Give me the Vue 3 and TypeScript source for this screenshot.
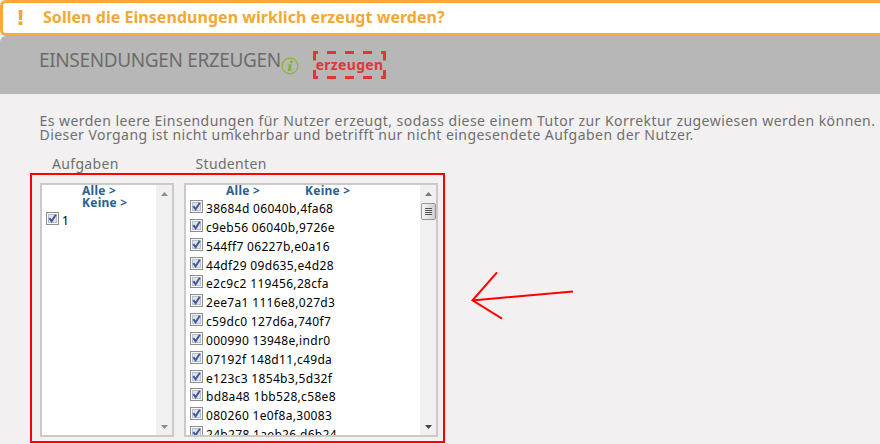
<script setup lang="ts">
const students: string[] = [
  '38684d 06040b,4fa68',
  'c9eb56 06040b,9726e',
  '544ff7 06227b,e0a16',
  '44df29 09d635,e4d28',
  'e2c9c2 119456,28cfa',
  '2ee7a1 1116e8,027d3',
  'c59dc0 127d6a,740f7',
  '000990 13948e,indr0',
  '07192f 148d11,c49da',
  'e123c3 1854b3,5d32f',
  'bd8a48 1bb528,c58e8',
  '080260 1e0f8a,30083',
  '24b278 1aeb26,d6b24',
]
const tasks: string[] = ['1']
</script>

<template>
  <div class="page">
    <div class="banner">
      <svg class="bang" width="5" height="15" viewBox="0 0 5 15"><path d="M0.5 0H4.5L4 10H1ZM0.5 11.5H4.5V15H0.5Z" fill="#f5a733" /></svg>
      <span>Sollen die Einsendungen wirklich erzeugt werden?</span>
    </div>
    <header class="head">
      <h1>EINSENDUNGEN ERZEUGEN</h1>
      <svg class="info" width="18" height="18" viewBox="0 0 18 18">
        <circle cx="9" cy="9" r="7.9" fill="none" stroke="#86b62c" stroke-width="1.1" />
        <circle cx="10.3" cy="4.8" r="1.4" fill="#7fb324" />
        <path d="M6.6 7.4H10.9L9.5 12.6L11 12.2V13C9.4 14.2 6.5 14.6 6.9 12.9L8 8.4H6.6Z" fill="#7fb324" />
      </svg>
      <button class="create" type="button">
        <svg width="73" height="28" viewBox="0 0 73 28">
          <path
            d="M0 1.5H5M14 1.5H23M32 1.5H41M50 1.5H59M68 1.5H73M0 26.5H5M14 26.5H23M32 26.5H41M50 26.5H59M68 26.5H73M1.5 0V9.5M1.5 19V28M71.5 0V9.5M71.5 19V28"
            stroke="#e03636"
            stroke-width="3"
            fill="none"
          />
        </svg>
        <span>erzeugen</span>
      </button>
    </header>
    <main class="body">
      <p class="intro">
        Es werden leere Einsendungen für Nutzer erzeugt, sodass diese einem Tutor zur Korrektur zugewiesen werden können.<br />
        <span class="second">Dieser Vorgang ist nicht umkehrbar und betrifft nur nicht eingesendete Aufgaben der Nutzer.</span>
      </p>
      <div class="labels">
        <span class="lt">Aufgaben</span>
        <span class="ls">Studenten</span>
      </div>
      <div class="marked">
        <section class="box">
          <div class="content">
            <div class="links stacked"><a>Alle &gt;</a><a>Keine &gt;</a></div>
            <label v-for="t in tasks" :key="t" class="row task">
              <svg class="check" width="13" height="13" viewBox="0 0 13 13">
                <rect x="0.5" y="0.5" width="12" height="12" fill="#f6f6f6" stroke="#8e8f8f" />
                <rect x="2.5" y="2.5" width="8" height="8" fill="#dfe4ea" stroke="#b9c0c9" />
                <path d="M3.3 6.2L5.6 9.2L9.8 2.8" fill="none" stroke="#4258a0" stroke-width="2" />
              </svg>
              <span>{{ t }}</span>
            </label>
          </div>
          <div class="bar off">
            <svg width="7" height="4" viewBox="0 0 7 4"><path d="M3.5 0L7 4H0Z" fill="#8b8b8b" /></svg>
            <svg width="7" height="4" viewBox="0 0 7 4"><path d="M0 0H7L3.5 4Z" fill="#8b8b8b" /></svg>
          </div>
        </section>
        <section class="box">
          <div class="content">
            <div class="links"><a>Alle &gt;</a><a>Keine &gt;</a></div>
            <label v-for="s in students" :key="s" class="row">
              <svg class="check" width="13" height="13" viewBox="0 0 13 13">
                <rect x="0.5" y="0.5" width="12" height="12" fill="#f6f6f6" stroke="#8e8f8f" />
                <rect x="2.5" y="2.5" width="8" height="8" fill="#dfe4ea" stroke="#b9c0c9" />
                <path d="M3.3 6.2L5.6 9.2L9.8 2.8" fill="none" stroke="#4258a0" stroke-width="2" />
              </svg>
              <span>{{ s }}</span>
            </label>
          </div>
          <div class="bar">
            <svg width="7" height="4" viewBox="0 0 7 4"><path d="M3.5 0L7 4H0Z" fill="#777" /></svg>
            <div class="thumb"><i></i><i></i><i></i><i></i></div>
            <svg width="7" height="4" viewBox="0 0 7 4"><path d="M0 0H7L3.5 4Z" fill="#444" /></svg>
          </div>
        </section>
      </div>
      <svg class="arrow" width="106" height="52" viewBox="0 0 106 52">
        <path d="M103 21.5L2 30.5M27 2.3L2.5 30.3L32 48.7" fill="none" stroke="#fe0000" stroke-width="2" />
      </svg>
    </main>
  </div>
</template>

<style>
body {
  margin: 0;
  background: #f2f0f1;
}
</style>

<style scoped>
.page {
  position: relative;
  width: 880px;
  height: 444px;
  overflow: hidden;
  background: #f2f0f1;
  font-family: 'Noto Sans', 'Open Sans', sans-serif;
  color: #6f6f6f;
}
.banner {
  box-sizing: border-box;
  width: 890px;
  height: 36px;
  border: 3px solid #f5ab35;
  border-radius: 6px;
  background: #fff;
  display: flex;
  align-items: center;
  padding: 0 0 1px 14.5px;
  color: #f5a733;
  font-size: 16px;
  font-weight: bold;
  letter-spacing: 0.04px;
}
.banner span {
  padding-bottom: 1px;
}
.bang {
  margin-right: 20.5px;
}
.head {
  box-sizing: border-box;
  height: 58px;
  width: 890px;
  border-radius: 6px 0 0 0;
  background: #b7b7b7;
  display: flex;
  align-items: flex-start;
  padding-left: 39px;
}
h1 {
  margin: 11px 0 0;
  width: 241.5px;
  font-size: 19px;
  line-height: 26px;
  font-weight: normal;
  letter-spacing: -0.36px;
  white-space: nowrap;
  color: #6c6c6c;
}
.info {
  margin-top: 21px;
}
.create {
  display: grid;
  width: 73px;
  height: 28px;
  margin: 15px 0 0 14.5px;
  padding: 0;
  border: 0;
  background: none;
  color: #e03636;
  font: bold 14px/28px 'Noto Sans', 'Open Sans', sans-serif;
  letter-spacing: 0.3px;
}
.create > * {
  grid-area: 1 / 1;
}
.create span {
  height: 28px;
}
.intro {
  margin: 20px 0 0 39.5px;
  font-size: 14px;
  line-height: 14px;
  letter-spacing: 0.455px;
  white-space: nowrap;
}
.labels {
  display: flex;
  margin-top: 14px;
  padding-left: 52px;
  font-size: 14px;
  line-height: 16px;
  letter-spacing: 0.33px;
}
.lt {
  width: 143.5px;
}
.marked {
  box-sizing: border-box;
  width: 415px;
  height: 270px;
  margin: 1px 0 0 30px;
  border: 2px solid #fe0000;
  padding: 8px 3px 8px 8px;
  display: flex;
  gap: 10px;
}
.box {
  box-sizing: border-box;
  flex: none;
  width: 134px;
  height: 254px;
  border: 2px solid #cbc9ca;
  background: #fff;
  display: flex;
  overflow: hidden;
}
.box + .box {
  width: 254px;
}
.content {
  flex: 1;
  min-width: 0;
  padding-left: 4px;
}
.links {
  display: flex;
  height: 12px;
  padding-left: 36px;
  font-size: 12px;
  line-height: 12px;
  font-weight: bold;
  color: #28608f;
  letter-spacing: 0.25px;
  margin-bottom: 2px;
  white-space: nowrap;
}
.links a {
  width: 79px;
}
.links.stacked {
  display: block;
  height: 24px;
}
.links.stacked a {
  display: block;
}
.row {
  display: flex;
  height: 18.85px;
  font-size: 12px;
  line-height: 19px;
  letter-spacing: 0.32px;
  color: #000;
  white-space: nowrap;
}
.check {
  flex: none;
  margin: 1px 3px 0 0;
}
.bar {
  width: 16px;
  background: #f0f0f0;
  display: flex;
  flex-direction: column;
  align-items: center;
  padding: 7px 0 6px;
}
.bar > svg:last-child {
  margin-top: auto;
}
.thumb {
  box-sizing: border-box;
  width: 15px;
  height: 17px;
  margin-top: 7px;
  border: 1px solid #979797;
  border-radius: 2px;
  background: linear-gradient(90deg, #f5f5f5, #cfcfcf);
  display: flex;
  flex-direction: column;
  align-items: center;
  gap: 1px;
  padding-top: 4px;
}
.thumb i {
  width: 7px;
  height: 1px;
  background: #555;
}
.arrow {
  position: absolute;
  left: 470px;
  top: 270px;
}
</style>
